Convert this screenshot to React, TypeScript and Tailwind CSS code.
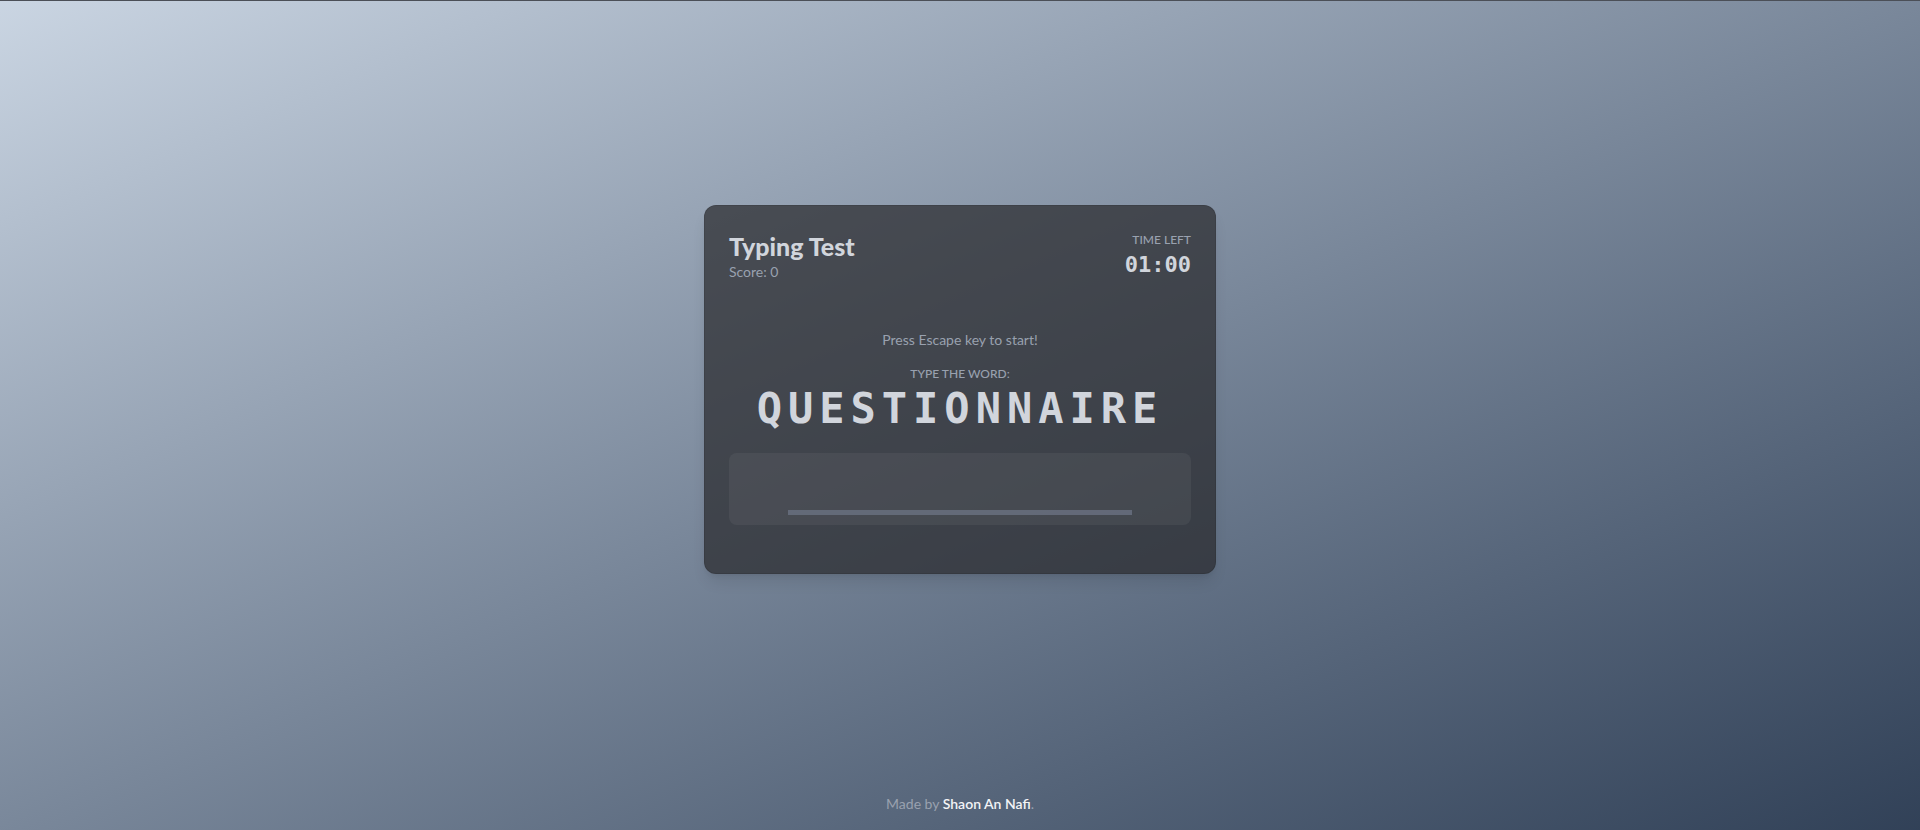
import { useState } from "react";

const WORD = "QUESTIONNAIRE";

export default function App() {
  const [typed, setTyped] = useState("");

  return (
    <div
      className="min-h-screen flex flex-col bg-linear-to-br from-slate-300 to-slate-700"
      style={{ fontFamily: "Lato, 'Noto Sans', sans-serif" }}
    >
      <div className="h-px bg-[#4b4f57]" />
      <main className="flex-1 flex items-center justify-center">
        <div className="w-[512px] rounded-xl border border-black/10 bg-zinc-800/70 px-6 pt-6 pb-12 shadow-lg">
          <div className="flex items-start justify-between">
            <div>
              <h1 className="text-[25px] font-black text-gray-300 leading-8">Typing Test</h1>
              <p className="text-sm text-gray-400">Score: 0</p>
            </div>
            <div className="pt-[2px] text-right">
              <p className="text-xs font-medium uppercase text-gray-400">Time left</p>
              <p
                className="mt-[3px] text-[22px] font-bold leading-7 text-gray-300"
                style={{ fontFamily: "'DejaVu Sans Mono', monospace" }}
              >
                01:00
              </p>
            </div>
          </div>

          <div className="mt-[48px] flex flex-col items-center">
            <p className="text-sm text-gray-400">Press Escape key to start!</p>
            <p className="mt-4 text-xs font-medium uppercase text-gray-400">Type the word:</p>
            <p
              className="mt-[3px] text-[42px] font-bold leading-[48px] tracking-[6px] text-gray-300"
              style={{ fontFamily: "'DejaVu Sans Mono', monospace" }}
            >
              {WORD}
            </p>
          </div>

          <div className="mt-[20px] flex h-[72px] items-end justify-center rounded-lg bg-white/5 pb-[10px]">
            <input
              value={typed}
              onChange={(e) => setTyped(e.target.value)}
              className="w-[344px] border-b-[5px] border-gray-500/80 bg-transparent text-center text-gray-300 outline-none"
            />
          </div>
        </div>
      </main>
      <footer className="py-4 text-center text-sm text-gray-400">
        Made by <span className="font-semibold text-gray-100">Shaon An Nafi</span>.
      </footer>
    </div>
  );
}
